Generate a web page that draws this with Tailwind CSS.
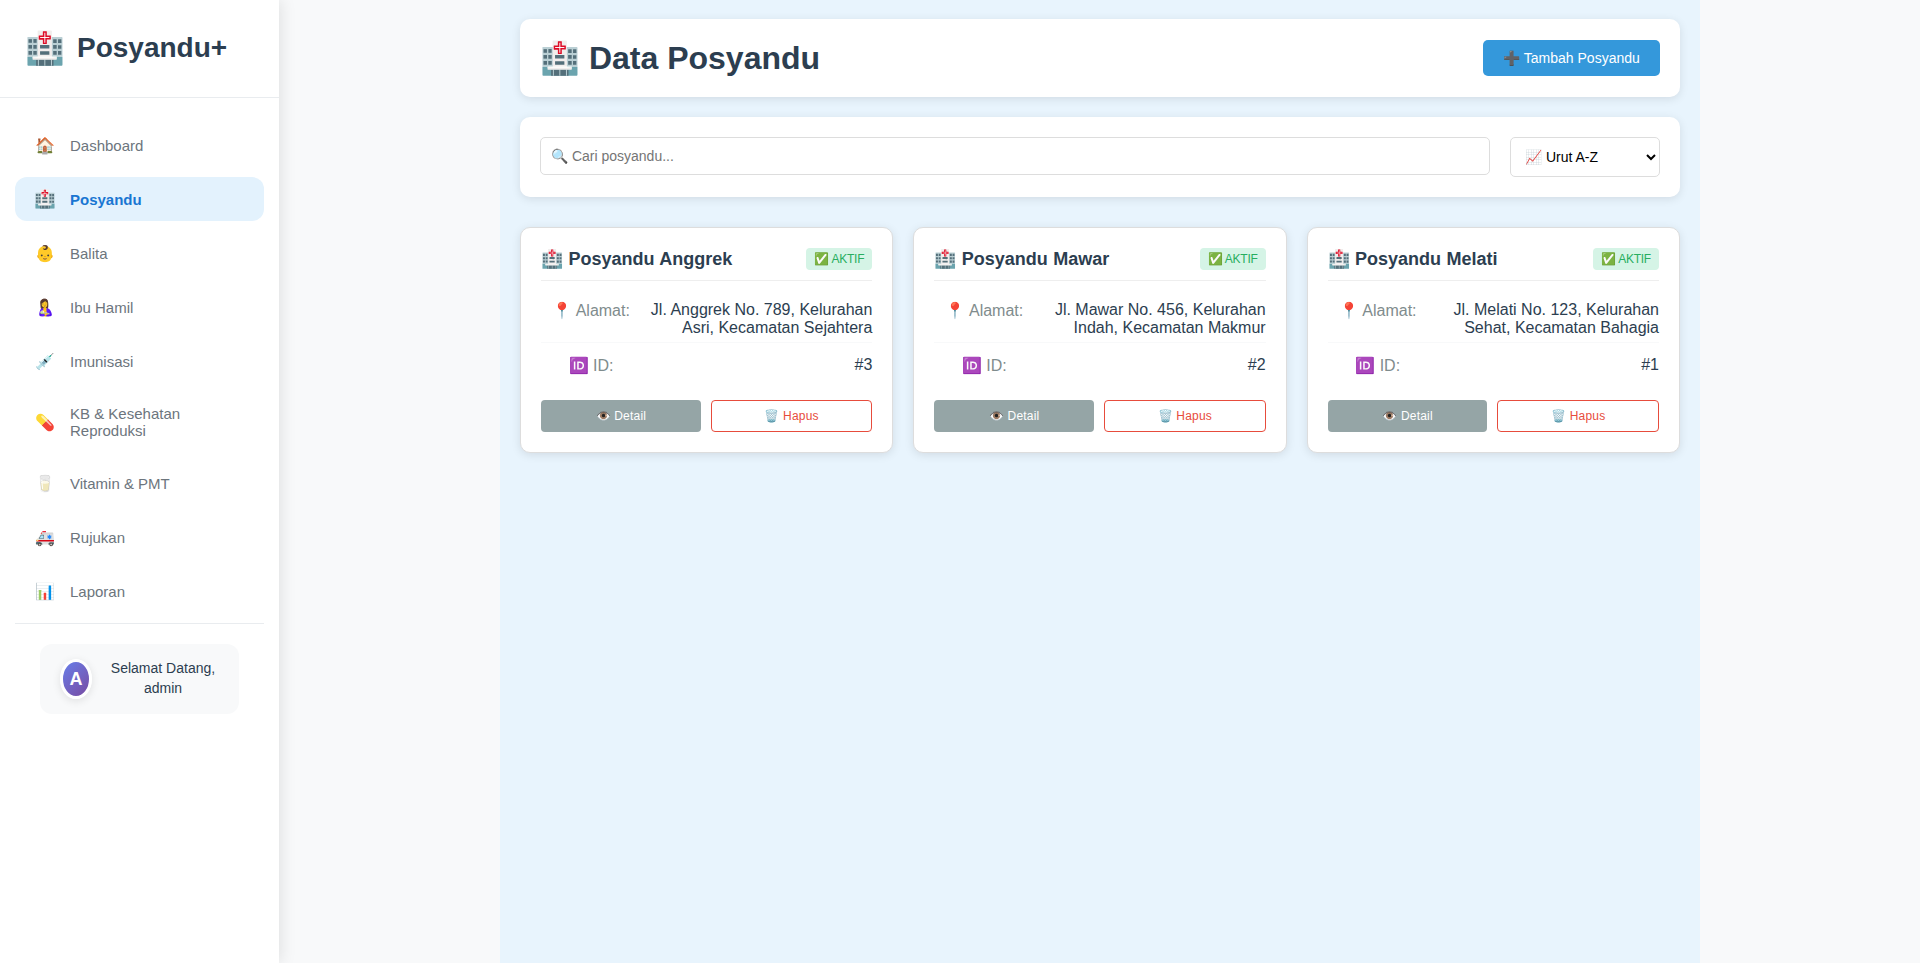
<!DOCTYPE html>
<html lang="id">
<head>
<meta charset="utf-8">
<title>Posyandu+</title>
<script src="https://cdn.jsdelivr.net/npm/@tailwindcss/browser@4"></script>
</head>
<body class="flex h-[963px] overflow-hidden bg-[#f8f9fa] font-['Liberation_Sans',sans-serif] leading-[normal] text-[#2c3e50]">
<aside class="relative z-10 h-full w-[279px] shrink-0 bg-white shadow-[2px_0_15px_rgba(0,0,0,0.1)]">
  <div class="flex h-[98px] items-center gap-3 border-b border-[#e9ecef] pb-0.5 pl-[25px]">
    <span class="text-[32px]">🏥</span>
    <span class="text-[28px] font-bold">Posyandu+</span>
  </div>
  <nav class="flex flex-col gap-2.5 px-[15px] pt-[25px] text-[15px] text-[#6c757d]">
    <a class="flex h-11 items-center gap-[13px] rounded-xl px-[18px]"><span class="w-6 text-center text-[16px]">🏠</span><span>Dashboard</span></a>
    <a class="flex h-11 items-center gap-[13px] rounded-xl bg-[#e3f2fd] px-[18px] font-bold text-[#1976d2]"><span class="w-6 text-center text-[17.6px] font-normal">🏥</span><span>Posyandu</span></a>
    <a class="flex h-11 items-center gap-[13px] rounded-xl px-[18px]"><span class="w-6 text-center text-[16px]">👶</span><span>Balita</span></a>
    <a class="flex h-11 items-center gap-[13px] rounded-xl px-[18px]"><span class="w-6 text-center text-[16px]">🤱</span><span>Ibu Hamil</span></a>
    <a class="flex h-11 items-center gap-[13px] rounded-xl px-[18px]"><span class="w-6 text-center text-[16px]">💉</span><span>Imunisasi</span></a>
    <a class="flex h-[58px] items-center gap-[13px] rounded-xl px-[18px]"><span class="w-6 text-center text-[16px]">💊</span><span>KB &amp; Kesehatan<br>Reproduksi</span></a>
    <a class="flex h-11 items-center gap-[13px] rounded-xl px-[18px]"><span class="w-6 text-center text-[16px]">🥛</span><span>Vitamin &amp; PMT</span></a>
    <a class="flex h-11 items-center gap-[13px] rounded-xl px-[18px]"><span class="w-6 text-center text-[16px]">🚑</span><span>Rujukan</span></a>
    <a class="flex h-11 items-center gap-[13px] rounded-xl px-[18px]"><span class="w-6 text-center text-[16px]">📊</span><span>Laporan</span></a>
  </nav>
  <div class="mx-[15px] mt-[10px] border-t border-[#e9ecef] px-[25px] pt-5">
    <div class="flex h-[70px] items-center rounded-xl bg-[#f8f9fa] pl-5">
      <div class="flex h-10 w-8 shrink-0 items-center justify-center rounded-[50%] border-3 border-white bg-linear-135 from-[#667eea] to-[#764ba2] text-[18px] font-bold text-white shadow-[0_2px_8px_rgba(0,0,0,0.1)]">A</div>
      <div class="-mt-0.5 ml-[15px] w-28 text-center text-sm">Selamat Datang, admin</div>
    </div>
  </div>
</aside>
<main class="ml-[221px] h-full w-[1200px] bg-[#e8f4fd] px-5 pt-[19px]">
  <header class="flex h-[78px] items-center justify-between rounded-[10px] bg-white px-5 shadow-[0_2px_10px_rgba(0,0,0,0.1)]">
    <h1 class="text-[32px] font-bold">🏥 Data Posyandu</h1>
    <button class="h-9 w-[177px] rounded-[5px] bg-[#3498db] text-sm text-white">➕ Tambah Posyandu</button>
  </header>
  <section class="mt-5 flex h-20 items-start gap-5 rounded-[10px] bg-white p-5 shadow-[0_2px_10px_rgba(0,0,0,0.1)]">
    <input class="h-[38px] flex-1 rounded-[5px] border border-[#ddd] px-2.5 text-sm placeholder:text-[#757575]" placeholder="🔍 Cari posyandu...">
    <select class="h-10 w-[150px] rounded-[5px] border border-[#ddd] bg-white px-2.5 text-sm text-black"><option>📈 Urut A-Z</option></select>
  </section>
  <section class="mt-[30px] grid grid-cols-3 gap-5">
    <article class="h-[226px] rounded-[10px] border border-[#ddd] bg-white p-5 shadow-[0_2px_10px_rgba(0,0,0,0.1)]">
      <div class="flex h-[33px] items-start justify-between border-b border-[#eee]"><h3 class="text-[18px] font-bold [word-spacing:0.4px]">🏥 Posyandu Anggrek</h3><span class="flex h-[22px] w-[66px] items-center rounded-[4px] bg-[#d5f4e6] pl-2 text-xs tracking-[-0.25px] whitespace-nowrap text-[#27ae60]">✅ AKTIF</span></div>
      <div class="mt-[11px] flex h-[51px] justify-between border-b border-[#f8f9fa] pt-[9px] text-base leading-[18px]"><span class="w-[100px] shrink-0 pt-px text-center text-[#7f8c8d]">📍 Alamat:</span><span class="w-[231px] text-right">Jl. Anggrek No. 789, Kelurahan Asri, Kecamatan Sejahtera</span></div>
      <div class="flex h-[57px] justify-between pt-[13px] text-base leading-[18px]"><span class="w-[100px] shrink-0 pt-px text-center text-[#7f8c8d]">🆔 ID:</span><span>#3</span></div>
      <div class="flex gap-2.5 text-xs tracking-[0.2px] [word-spacing:-1.2px]"><button class="h-8 flex-1 rounded-[4px] bg-[#95a5a6] text-white">👁️ Detail</button><button class="h-8 flex-1 rounded-[4px] border border-[#e74c3c] text-[#e74c3c]">🗑️ Hapus</button></div>
    </article>
    <article class="h-[226px] rounded-[10px] border border-[#ddd] bg-white p-5 shadow-[0_2px_10px_rgba(0,0,0,0.1)]">
      <div class="flex h-[33px] items-start justify-between border-b border-[#eee]"><h3 class="text-[18px] font-bold [word-spacing:0.4px]">🏥 Posyandu Mawar</h3><span class="flex h-[22px] w-[66px] items-center rounded-[4px] bg-[#d5f4e6] pl-2 text-xs tracking-[-0.25px] whitespace-nowrap text-[#27ae60]">✅ AKTIF</span></div>
      <div class="mt-[11px] flex h-[51px] justify-between border-b border-[#f8f9fa] pt-[9px] text-base leading-[18px]"><span class="w-[100px] shrink-0 pt-px text-center text-[#7f8c8d]">📍 Alamat:</span><span class="w-[231px] text-right">Jl. Mawar No. 456, Kelurahan Indah, Kecamatan Makmur</span></div>
      <div class="flex h-[57px] justify-between pt-[13px] text-base leading-[18px]"><span class="w-[100px] shrink-0 pt-px text-center text-[#7f8c8d]">🆔 ID:</span><span>#2</span></div>
      <div class="flex gap-2.5 text-xs tracking-[0.2px] [word-spacing:-1.2px]"><button class="h-8 flex-1 rounded-[4px] bg-[#95a5a6] text-white">👁️ Detail</button><button class="h-8 flex-1 rounded-[4px] border border-[#e74c3c] text-[#e74c3c]">🗑️ Hapus</button></div>
    </article>
    <article class="h-[226px] rounded-[10px] border border-[#ddd] bg-white p-5 shadow-[0_2px_10px_rgba(0,0,0,0.1)]">
      <div class="flex h-[33px] items-start justify-between border-b border-[#eee]"><h3 class="text-[18px] font-bold [word-spacing:0.4px]">🏥 Posyandu Melati</h3><span class="flex h-[22px] w-[66px] items-center rounded-[4px] bg-[#d5f4e6] pl-2 text-xs tracking-[-0.25px] whitespace-nowrap text-[#27ae60]">✅ AKTIF</span></div>
      <div class="mt-[11px] flex h-[51px] justify-between border-b border-[#f8f9fa] pt-[9px] text-base leading-[18px]"><span class="w-[100px] shrink-0 pt-px text-center text-[#7f8c8d]">📍 Alamat:</span><span class="w-[231px] text-right">Jl. Melati No. 123, Kelurahan Sehat, Kecamatan Bahagia</span></div>
      <div class="flex h-[57px] justify-between pt-[13px] text-base leading-[18px]"><span class="w-[100px] shrink-0 pt-px text-center text-[#7f8c8d]">🆔 ID:</span><span>#1</span></div>
      <div class="flex gap-2.5 text-xs tracking-[0.2px] [word-spacing:-1.2px]"><button class="h-8 flex-1 rounded-[4px] bg-[#95a5a6] text-white">👁️ Detail</button><button class="h-8 flex-1 rounded-[4px] border border-[#e74c3c] text-[#e74c3c]">🗑️ Hapus</button></div>
    </article>
  </section>
</main>
</body>
</html>
